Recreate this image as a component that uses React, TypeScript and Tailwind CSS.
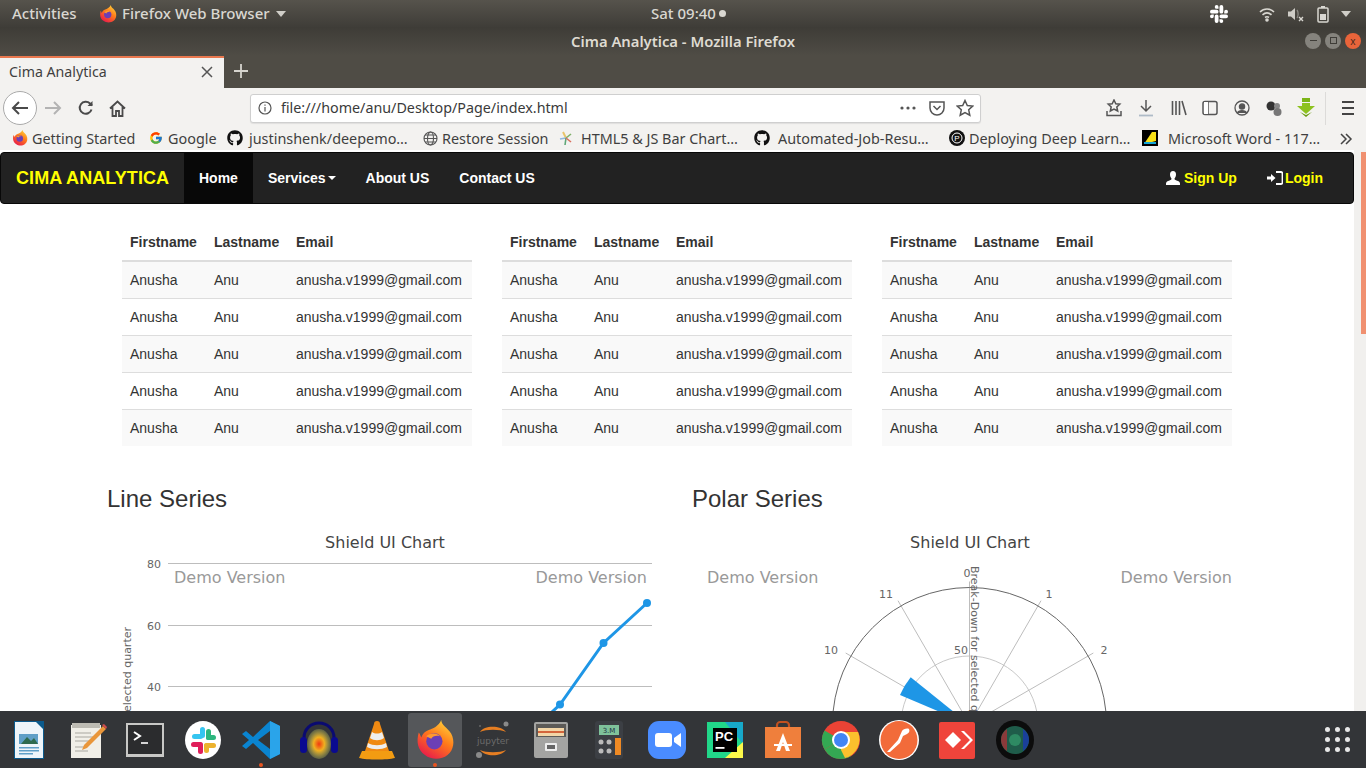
import React from "react";
import { FaGithub } from "react-icons/fa";
import { FcGoogle } from "react-icons/fc";
import { SiSlack } from "react-icons/si";

const ui = "font-['Noto_Sans','Open_Sans',sans-serif]";

function Firefox({ s = 18 }: { s?: number }) {
  return (
    <svg width={s} height={s} viewBox="0 0 32 32" className="shrink-0">
      <defs>
        <linearGradient id="ffa" x1="0.8" y1="0" x2="0.2" y2="1">
          <stop offset="0" stopColor="#ffd43b" />
          <stop offset="0.45" stopColor="#ff7a1a" />
          <stop offset="1" stopColor="#e6134f" />
        </linearGradient>
      </defs>
      <path d="M21 0c0 4 5 6 8 11 3 6 2 13-3 17-5 4-13 4-18 0C2 24 1 17 3 10c1 1 1 2 2 4 1-3 3-5 6-6 3-1 8-3 10-8z" fill="url(#ffa)" />
      <circle cx="15.5" cy="17" r="6.5" fill="#6b3fb5" />
      <path d="M9 13c3-3 9-3 11 0-3-1-6 0-7 2l-4-2z" fill="#ff9a2e" />
    </svg>
  );
}

function Cell({ children, active, dot }: { children: React.ReactNode; active?: boolean; dot?: boolean }) {
  return (
    <div className="relative w-[58px] h-[57px] flex items-center justify-center">
      {active && <div className="absolute left-[2px] top-[2px] w-[54px] h-[54px] rounded-[3px] bg-[#55575a]" />}
      <div className="relative flex items-center justify-center">{children}</div>
      {dot && <div className="absolute left-[27px] top-[52px] w-[4px] h-[4px] rounded-full bg-[#e95420]" />}
    </div>
  );
}

const I = ({ children, w = 40, h = 40 }: { children: React.ReactNode; w?: number; h?: number }) => (
  <svg width={w} height={h} viewBox="0 0 40 40">{children}</svg>
);

function Dock() {
  return (
    <div className="h-[57px] shrink-0 bg-[#333538] flex items-center">
      <Cell>
        <I>
          <path d="M5 1h30v38H5z" fill="#0b5a8c" />
          <path d="M6 2h21l7 7v29H6z" fill="#eef5fa" />
          <path d="M27 1h8v8z" fill="#0b5a8c" />
          <path d="M10 14h19v10H10z" fill="#5f9fc7" />
          <path d="M12 24l6-7 4 4 3-3 4 6z" fill="#2f6b4f" />
          <path d="M10 27h20v1.5H10zM10 30h20v1.5H10zM10 33h14v1.5H10z" fill="#5f9fc7" />
        </I>
      </Cell>
      <Cell>
        <I>
          <path d="M4 5h30v33H4z" fill="#f1efe8" />
          <path d="M5 3h28v5H5z" fill="#bdbbb3" />
          <path d="M8 13h16M8 17h18M8 21h14M8 27h10M8 31h13" stroke="#a9a7a0" strokeWidth="1.2" />
          <path d="M36 6l3 3-19 19-5 2 2-5z" fill="#e9963a" />
          <path d="M35 5l4 4 1-2-3-3z" fill="#d24c4c" />
        </I>
      </Cell>
      <Cell>
        <I>
          <rect x="1" y="3" width="38" height="34" fill="#c8c8c6" />
          <rect x="3" y="5" width="34" height="29" fill="#2b2c2e" />
          <path d="M9 12l6 4-6 4" fill="none" stroke="#fff" strokeWidth="2" />
          <path d="M16 23h7" stroke="#fff" strokeWidth="1.6" />
        </I>
      </Cell>
      <Cell>
        <I>
          <ellipse cx="20" cy="20" rx="18" ry="19" fill="#fff" />
          <rect x="17" y="7" width="5" height="11" rx="2.5" fill="#36c5f0" />
          <rect x="9" y="14" width="11" height="5" rx="2.5" fill="#36c5f0" />
          <rect x="23" y="9" width="5" height="11" rx="2.5" fill="#2eb67d" />
          <rect x="23" y="15" width="10" height="5" rx="2.5" fill="#2eb67d" />
          <rect x="21" y="23" width="12" height="5" rx="2.5" fill="#ecb22e" />
          <rect x="21" y="23" width="5" height="10" rx="2.5" fill="#ecb22e" />
          <rect x="8" y="22" width="11" height="5" rx="2.5" fill="#e01e5a" />
          <rect x="15" y="22" width="5" height="12" rx="2.5" fill="#e01e5a" />
        </I>
      </Cell>
      <Cell dot>
        <I>
          <path d="M29 1l10 5v28l-10 5-17-16-7 6-4-3 7-6-7-6 4-3 7 6z" fill="#0a84d0" />
          <path d="M29 1l10 5v28l-10 5z" fill="#2aa4ea" />
          <path d="M29 11L17 20l12 9z" fill="#333538" />
        </I>
      </Cell>
      <Cell>
        <I>
          <defs>
            <radialGradient id="aud">
              <stop offset="0" stopColor="#f03a10" />
              <stop offset="0.45" stopColor="#f0b020" />
              <stop offset="1" stopColor="#b9c060" stopOpacity="0.3" />
            </radialGradient>
          </defs>
          <path d="M5 24V18C5 9 12 3 20 3s15 6 15 15v6" fill="none" stroke="#0a0a70" strokeWidth="3" />
          <ellipse cx="20" cy="24" rx="12" ry="15" fill="url(#aud)" />
          <rect x="1" y="17" width="7" height="16" rx="3.5" fill="#0a0a90" />
          <rect x="32" y="17" width="7" height="16" rx="3.5" fill="#0a0a90" />
        </I>
      </Cell>
      <Cell>
        <I>
          <path d="M20 1c2 0 3 1 3 3l9 27H8l9-27c0-2 1-3 3-3z" fill="#f08a12" />
          <path d="M15 12c3 2 7 2 10 0l2 6c-4 3-10 3-14 0zM11 23c5 3 13 3 18 0l1 4c-6 3-14 3-20 0z" fill="#eee" />
          <path d="M5 31h30l3 7c-8 2-28 2-36 0z" fill="#f39c12" />
        </I>
      </Cell>
      <Cell active dot>
        <Firefox s={40} />
      </Cell>
      <Cell>
        <I>
          <path d="M7 12c4-7 21-7 26 0-6-3-20-3-26 0zM7 30c5 7 21 7 26 0-6 3-20 3-26 0z" fill="#e67e22" />
          <text x="20" y="23.5" textAnchor="middle" fontSize="9" fill="#6b6b6b" fontFamily="DejaVu Sans">jupyter</text>
          <circle cx="33" cy="4" r="2.5" fill="#8a8a8a" />
          <circle cx="6" cy="35" r="3" fill="#8a8a8a" />
          <circle cx="7" cy="6" r="1" fill="#666" />
        </I>
      </Cell>
      <Cell>
        <I>
          <rect x="3" y="2" width="34" height="36" rx="2" fill="#a4a4a2" />
          <rect x="5" y="4" width="30" height="13" fill="#5c5a57" />
          <rect x="7" y="8" width="26" height="8" fill="#f3d6a7" />
          <rect x="7" y="11" width="26" height="2" fill="#d4653c" />
          <rect x="14" y="23" width="12" height="8" rx="1" fill="#eee" />
          <rect x="16" y="25" width="8" height="4" fill="#666" />
        </I>
      </Cell>
      <Cell>
        <I>
          <rect x="6" y="1" width="28" height="38" rx="3" fill="#3c3f44" />
          <rect x="10" y="5" width="20" height="10" fill="#7fc29b" />
          <text x="20" y="13" textAnchor="middle" fontSize="7" fill="#234" fontFamily="DejaVu Sans">3.M</text>
          <rect x="26" y="18" width="6" height="17" fill="#ef8a24" />
          <circle cx="12" cy="22" r="2.5" fill="#bbb" />
          <circle cx="20" cy="22" r="2.5" fill="#bbb" />
          <circle cx="12" cy="31" r="2.5" fill="#bbb" />
          <circle cx="20" cy="31" r="2.5" fill="#bbb" />
        </I>
      </Cell>
      <Cell>
        <I>
          <rect x="1" y="1" width="38" height="38" rx="11" fill="#4a8cff" />
          <rect x="8" y="13" width="17" height="14" rx="3" fill="#fff" />
          <path d="M27 18l7-5v14l-7-5z" fill="#fff" />
        </I>
      </Cell>
      <Cell>
        <I>
          <path d="M2 2h36v36H2z" fill="#21d789" />
          <path d="M20 2h18v22z" fill="#17a8c9" />
          <path d="M20 38l18-16v16z" fill="#fcf84a" />
          <rect x="8" y="8" width="24" height="24" fill="#000" />
          <text x="10" y="21" fontSize="13" fontWeight="700" fill="#fff" fontFamily="Liberation Sans">PC</text>
          <rect x="10.5" y="27" width="9" height="1.8" fill="#fff" />
        </I>
      </Cell>
      <Cell>
        <I>
          <path d="M14 9V5c0-2 2-3 3-3h6c1 0 3 1 3 3v4" fill="none" stroke="#c2501f" strokeWidth="2.2" />
          <path d="M2 7h36l0 31H2z" fill="#ef7f3c" />
          <path d="M20 13l-7 18h4l3-9 3 9h4z" fill="#fff" />
          <rect x="11" y="24" width="18" height="2" fill="#fff" />
        </I>
      </Cell>
      <Cell>
        <I>
          <circle cx="20" cy="20" r="19" fill="#ea4335" />
          <path d="M20 20L3.5 29.5A19 19 0 0 1 3.5 10.5z" fill="#34a853" />
          <path d="M20 20L3.5 29.5A19 19 0 0 0 20 39c4 0 7-1 10-3z" fill="#34a853" />
          <path d="M20 12h17a19 19 0 0 1-13 26l-4-8z" fill="#fbc02d" />
          <circle cx="20" cy="20" r="9" fill="#fff" />
          <circle cx="20" cy="20" r="7" fill="#4285f4" />
        </I>
      </Cell>
      <Cell>
        <I>
          <ellipse cx="20" cy="20" rx="20" ry="20" fill="#fff" />
          <ellipse cx="20" cy="20" rx="18.5" ry="19" fill="#f26b3a" />
          <path d="M8 32l11-12 4-9c1-2 5-3 7-2 1 2 0 4-2 5l-4 2-3 7-10 9z" fill="#fff" />
        </I>
      </Cell>
      <Cell>
        <I>
          <rect x="2" y="2" width="36" height="37" rx="2" fill="#ef443b" />
          <path d="M16 12l8 8-8 8-8-8z" fill="#fff" />
          <path d="M24 11l3-0 9 9-9 9h-3l9-9z" fill="#fff" />
        </I>
      </Cell>
      <Cell>
        <I>
          <ellipse cx="20" cy="20" rx="19" ry="20" fill="#0c0c0c" />
          <circle cx="20" cy="20" r="14" fill="#1f5c4a" />
          <path d="M6 20a14 14 0 0 1 6-11v22a14 14 0 0 1-6-11z" fill="#8a3a3a" />
          <path d="M34 20a14 14 0 0 0-6-11v22a14 14 0 0 0 6-11z" fill="#1a3f9a" />
          <circle cx="20" cy="20" r="6" fill="#2e8a63" />
        </I>
      </Cell>
      <div className="ml-[281px] grid grid-cols-3 gap-[5.5px] w-[25px]">
        {Array.from({ length: 9 }).map((_, i) => (
          <div key={i} className="w-[4.5px] h-[4.5px] rounded-full bg-[#e8e8e8]" />
        ))}
      </div>
    </div>
  );
}

function TopBar() {
  return (
    <div className={`${ui} h-[27px] shrink-0 bg-gradient-to-b from-[#56534c] to-[#3f3d38] flex items-center text-[15px] font-medium text-[#d9d7d1]`}>
      <span className="ml-[12px] w-[87px] whitespace-nowrap">Activities</span>
      <Firefox s={18} />
      <span className="ml-[5px] w-[154px] whitespace-nowrap">Firefox Web Browser</span>
      <svg width="10" height="6" viewBox="0 0 10 6" className="mr-[365px]"><path d="M0 0h10L5 6z" fill="#d0cec8" /></svg>
      <span className="w-[66px] whitespace-nowrap">Sat 09:40</span>
      <span className="w-[7px] h-[7px] rounded-full bg-[#d9d7d1] ml-[2px] mr-[484px]" />
      <SiSlack className="text-white" size={18} />
      <svg width="18" height="18" viewBox="0 0 18 18" className="ml-[30px]" fill="none" stroke="#d9d7d1" strokeWidth="1.6">
        <path d="M2 7c4-4 10-4 14 0M4.5 9.8c3-2.5 6-2.5 9 0M7 12.5c1.400-1 2.600-1 4 0" />
        <circle cx="9" cy="15" r="1" fill="#d9d7d1" />
      </svg>
      <svg width="18" height="18" viewBox="0 0 18 18" className="ml-[10px]">
        <path d="M2 6.500h3l4-3.500v12l-4-3.500H2z" fill="#cfcdc7" />
        <path d="M11 5c1.500 2 1.500 6 0 8" stroke="#8b8983" strokeWidth="1.300" fill="none" />
        <path d="M13 12l4 4M17 12l-4 4" stroke="#d9d7d1" strokeWidth="1.400" />
      </svg>
      <svg width="12" height="18" viewBox="0 0 12 18" className="ml-[13px]" fill="none">
        <rect x="1" y="3" width="10" height="14" rx="1" stroke="#d9d7d1" strokeWidth="1.500" />
        <rect x="4" y="1" width="4" height="2" fill="#d9d7d1" />
        <rect x="3" y="9" width="6" height="6" fill="#d9d7d1" />
      </svg>
      <svg width="10" height="6" viewBox="0 0 10 6" className="ml-[12px]"><path d="M0 0h10L5 6z" fill="#d0cec8" /></svg>
    </div>
  );
}

function TitleBar() {
  return (
    <div className={`${ui} h-[29px] shrink-0 bg-gradient-to-b from-[#3e3c37] to-[#4f4c45] grid grid-cols-[1fr_auto_1fr] items-center`}>
      <div />
      <span className="text-[14.8px] leading-[20px] pb-[2px] font-semibold text-[#dfdbd2] whitespace-nowrap">Cima Analytica - Mozilla Firefox</span>
      <div className="flex justify-end gap-[4px] pr-[5px] pb-[2px]">
        <div className="w-[16px] h-[16px] rounded-full bg-[#85837d] flex items-center justify-center"><div className="w-[7px] h-[1px] bg-[#3f3d38]" /></div>
        <div className="w-[16px] h-[16px] rounded-full bg-[#85837d] flex items-center justify-center"><div className="w-[7px] h-[7px] border border-[#3f3d38]" /></div>
        <div className="w-[16px] h-[16px] rounded-full bg-[#e9643a] flex items-center justify-center text-[10px] leading-none text-[#4a2a1a]">x</div>
      </div>
    </div>
  );
}

function TabRow() {
  return (
    <div className={`${ui} h-[32px] shrink-0 bg-[#4f4c45] flex`}>
      <div className="w-[224px] h-[32px] bg-[#f3f2f0] border-t-2 border-[#e9784f] flex items-center pl-[9px] pr-[11px] pb-[3px] text-[14.2px] text-[#3f3f3f]">
        <span className="flex-1 whitespace-nowrap">Cima Analytica</span>
        <svg width="12" height="12" viewBox="0 0 12 12" stroke="#555" strokeWidth="1.500"><path d="M1 1l10 10M11 1L1 11" /></svg>
      </div>
      <svg width="14" height="14" viewBox="0 0 14 14" className="ml-[10px] mt-[8px]" stroke="#d6d4ce" strokeWidth="1.800"><path d="M7 0v14M0 7h14" /></svg>
    </div>
  );
}

function Toolbar() {
  const stroke = "#4a4a4a";
  return (
    <div className={`${ui} h-[37px] pt-[3px] shrink-0 bg-[#f3f2f0] flex items-center`}>
      <div className="ml-[3px] w-[34px] h-[34px] rounded-full bg-white border border-[#aaa] flex items-center justify-center">
        <svg width="18" height="16" viewBox="0 0 18 16" fill="none" stroke={stroke} strokeWidth="2"><path d="M17 8H2M8 2L2 8l6 6" /></svg>
      </div>
      <svg width="18" height="16" viewBox="0 0 18 16" fill="none" stroke="#b3b3b3" strokeWidth="2" className="ml-[7px]"><path d="M1 8h15M10 2l6 6-6 6" /></svg>
      <svg width="16" height="16" viewBox="0 0 16 16" fill="none" stroke={stroke} strokeWidth="2" className="ml-[16px]"><path d="M13.500 9.500A6 6 0 1 1 12 3.500l2 2" /><path d="M14.500 1v5h-5" fill={stroke} stroke="none" /></svg>
      <svg width="17" height="17" viewBox="0 0 17 17" fill="none" stroke={stroke} strokeWidth="1.800" className="ml-[15px]"><path d="M1 8.500l7.500-7 7.500 7M3.500 7v9h3.500v-5h3v5h3.500V7" /></svg>
      <div className="ml-[124px] w-[731px] h-[29px] bg-white border border-[#cfcfcf] rounded-[3px] flex items-center pl-[7px] pr-[6px] shadow-[0_1px_1px_rgba(0,0,0,0.08)]">
        <svg width="14" height="14" viewBox="0 0 14 14" fill="none" stroke="#555" strokeWidth="1.200"><circle cx="7" cy="7" r="6" /><path d="M7 6v4.500M7 3.500v1.200" /></svg>
        <span className="ml-[9px] flex-1 text-[14.3px] text-[#3a3a3a] whitespace-nowrap">file:///home/anu/Desktop/Page/index.html</span>
        <svg width="16" height="4" viewBox="0 0 16 4" fill="#555"><circle cx="2" cy="2" r="1.600" /><circle cx="8" cy="2" r="1.600" /><circle cx="14" cy="2" r="1.600" /></svg>
        <svg width="16" height="16" viewBox="0 0 16 16" fill="none" stroke="#555" strokeWidth="1.500" className="ml-[13px]"><path d="M1 2h14v6a7 7 0 0 1-14 0z" /><path d="M4.500 6L8 9.500 11.500 6" /></svg>
        <svg width="18" height="18" viewBox="0 0 18 18" fill="none" stroke="#555" strokeWidth="1.500" className="ml-[11px]"><path d="M9 1.500l2.300 5 5.400.6-4 3.700 1.100 5.400L9 13.500l-4.800 2.700 1.100-5.400-4-3.700 5.400-.6z" /></svg>
      </div>
      <svg width="16" height="18" viewBox="0 0 16 18" fill="none" stroke="#555" strokeWidth="1.500" className="ml-[125px]"><path d="M8 1l1.800 3.800 4 .4-3 2.800.9 4L8 10l-3.700 2 .9-4-3-2.800 4-.4z" /><path d="M1 12v4.500h14V12" /></svg>
      <svg width="16" height="18" viewBox="0 0 16 18" fill="none" className="ml-[16px]"><path d="M8 1v11M3 7l5 5 5-5" stroke="#555" strokeWidth="1.500" /><path d="M1 16.500h14" stroke="#aebbc7" strokeWidth="1.800" /></svg>
      <svg width="16" height="16" viewBox="0 0 16 16" fill="none" stroke="#555" strokeWidth="1.600" className="ml-[17px]"><path d="M1.500 1v14M5 1v14M8.500 1v14M11 1l4 14" /></svg>
      <svg width="16" height="16" viewBox="0 0 16 16" fill="none" stroke="#555" strokeWidth="1.500" className="ml-[15px]"><rect x="1" y="1.500" width="14" height="13" rx="2" /><path d="M6 1.500v13" /><path d="M2 2h4v12H2z" fill="#fff" stroke="none" /></svg>
      <svg width="16" height="16" viewBox="0 0 16 16" fill="none" stroke="#555" strokeWidth="1.300" className="ml-[16px]"><circle cx="8" cy="8" r="7" /><circle cx="8" cy="6.500" r="2.600" fill="#555" /><path d="M3.500 13c1-3 8-3 9 0" fill="#555" /></svg>
      <svg width="18" height="18" viewBox="0 0 18 18" className="ml-[15px]"><circle cx="6" cy="7" r="4.500" fill="#333" /><circle cx="12" cy="7" r="3" fill="#888" /><circle cx="12.500" cy="13" r="4" fill="#777" /></svg>
      <svg width="18" height="20" viewBox="0 0 18 20" className="ml-[14px]"><path d="M5 0h8v4h-8z" fill="#7cb518" /><path d="M5 5h8v3h5l-9 8-9-8h5z" fill="#8dc21f" /><path d="M3 14l6 5 6-5-6 3z" fill="#6a9c10" /></svg>
      <div className="ml-[10px] w-[1px] h-[33px] bg-[#dcdbd9]" />
      <div className="ml-[16px] flex flex-col gap-[4px]">
        <div className="w-[12px] h-[2px] bg-[#444]" /><div className="w-[12px] h-[2px] bg-[#444]" /><div className="w-[12px] h-[2px] bg-[#444]" />
      </div>
    </div>
  );
}

function Book({ w, icon, text, g = 4 }: { w: number; icon: React.ReactNode; text: string; g?: number }) {
  return (
    <div className="flex items-center shrink-0" style={{ width: w }}>
      <span className="w-[16px] flex justify-center shrink-0">{icon}</span>
      <span className="whitespace-nowrap text-[14.4px] text-[#3f3f3f]" style={{ marginLeft: g }}>{text}</span>
    </div>
  );
}

function Bookmarks() {
  return (
    <div className={`${ui} h-[25px] pt-[2px] shrink-0 bg-[#f3f2f0] flex items-center pl-[12px]`}>
      <Book w={136} icon={<Firefox s={16} />} text="Getting Started" />
      <Book w={79} icon={<FcGoogle size={14} />} text="Google" />
      <Book w={195} g={6} icon={<FaGithub size={16} color="#111" />} text="justinshenk/deepemo…" />
      <Book w={136} icon={
        <svg width="15" height="15" viewBox="0 0 15 15" fill="none" stroke="#555" strokeWidth="1.100"><circle cx="7.500" cy="7.500" r="6.500" /><ellipse cx="7.500" cy="7.500" rx="3" ry="6.500" /><path d="M1 7.500h13M2 4h11M2 11h11" /></svg>
      } text="Restore Session" />
      <Book w={196} g={7} icon={
        <svg width="16" height="16" viewBox="0 0 16 16"><path d="M8 8L5 2" stroke="#e9c46a" strokeWidth="2" /><path d="M8 8l5-4" stroke="#7fb069" strokeWidth="1.600" /><path d="M8 8l-6 1" stroke="#8fb8de" strokeWidth="1.600" /><path d="M8 8l-1 7" stroke="#5fa777" strokeWidth="1.600" /><path d="M8 8l5 4" stroke="#d9705f" strokeWidth="1.600" /></svg>
      } text="HTML5 & JS Bar Chart…" />
      <Book w={195} g={8} icon={<FaGithub size={16} color="#111" />} text="Automated-Job-Resu…" />
      <Book w={193} icon={
        <svg width="16" height="16" viewBox="0 0 16 16"><circle cx="8" cy="8" r="8" fill="#111" /><circle cx="8" cy="8" r="5" fill="none" stroke="#fff" strokeWidth="1" /><text x="8" y="11" textAnchor="middle" fontSize="8" fill="#fff" fontFamily="Liberation Sans">P</text></svg>
      } text="Deploying Deep Learn…" />
      <Book w={197} g={10} icon={
        <svg width="16" height="16" viewBox="0 0 16 16"><rect width="16" height="16" fill="#000" /><path d="M2 14L10 2h4v9z" fill="#f7e017" /><path d="M2 12h12v2H2z" fill="#14a6d8" /></svg>
      } text="Microsoft Word - 117…" />
      <svg width="14" height="12" viewBox="0 0 14 12" fill="none" stroke="#444" strokeWidth="1.500"><path d="M2 1l5 5-5 5M7 1l5 5-5 5" /></svg>
    </div>
  );
}

function Navbar() {
  const link = "h-full flex items-center px-[15px] text-[14px] font-bold text-white";
  return (
    <nav className="mt-[2px] h-[52px] bg-[#222222] border border-[#080808] rounded-[4px] flex items-stretch">
      <div className="w-[183px] flex items-center pl-[15px] text-[18px] tracking-[0.08px] font-bold text-[#ffff00] whitespace-nowrap">CIMA ANALYTICA</div>
      <div className={`${link} bg-[#080808]`}>Home</div>
      <div className={link}>
        Services
        <span className="ml-[2px] w-0 h-0 border-x-[4px] border-x-transparent border-t-[4px] border-t-white" />
      </div>
      <div className={link}>About US</div>
      <div className={link}>Contact US</div>
      <div className="ml-auto flex items-center pr-[30px] text-[14px] font-bold text-[#ffff00]">
        <svg width="14" height="14" viewBox="0 0 14 14" fill="#fff"><path d="M7 0c2 0 3 1.500 3 3.500S9 7 8.500 7.500c0 1 .5 1.500 2 2 2 .7 3.500 1.300 3.500 3V14H0v-1.500c0-1.700 1.500-2.300 3.500-3 1.500-.5 2-1 2-2C5 7 4 5.500 4 3.500S5 0 7 0z" /></svg>
        <span className="ml-[4px]">Sign Up</span>
        <svg width="16" height="14" viewBox="0 0 16 14" className="ml-[30px]" fill="#fff"><path d="M0 5.500h4V3l4.500 4L4 11V8.500H0z" /><path d="M9 1h5a1.500 1.500 0 0 1 1.500 1.500v9A1.500 1.500 0 0 1 14 13H9" fill="none" stroke="#fff" strokeWidth="1.800" /></svg>
        <span className="ml-[2px]">Login</span>
      </div>
    </nav>
  );
}

function DataTable() {
  return (
    <table className="w-[350px] table-fixed text-[14px] text-[#333]">
      <thead>
        <tr className="h-[38px] border-b-2 border-[#dddddd] text-left">
          <th className="w-[84px] pl-[8px] pt-[1px] font-bold">Firstname</th>
          <th className="w-[82px] pl-[8px] pt-[1px] font-bold">Lastname</th>
          <th className="pl-[8px] pt-[1px] font-bold">Email</th>
        </tr>
      </thead>
      <tbody>
        {[0, 1, 2, 3, 4].map((i) => (
          <tr key={i} className={`h-[37px] ${i < 4 ? "border-b border-[#dddddd]" : ""} ${i % 2 === 0 ? "bg-[#f9f9f9]" : ""}`}>
            <td className="pl-[8px] pt-[1px]">Anusha</td>
            <td className="pl-[8px] pt-[1px]">Anu</td>
            <td className="pl-[8px] pt-[1px] whitespace-nowrap">anusha.v1999@gmail.com</td>
          </tr>
        ))}
      </tbody>
    </table>
  );
}

const sv = "DejaVu Sans, sans-serif";

function LineChart() {
  return (
    <svg width="555" height="190" viewBox="0 0 555 190" className="block" fontFamily={sv}>
      <text x="278" y="18" textAnchor="middle" fontSize="16" fill="#444">Shield UI Chart</text>
      <text x="67" y="53" fontSize="16" fill="#999">Demo Version</text>
      <text x="540" y="53" textAnchor="end" fontSize="16" fill="#999">Demo Version</text>
      {[33.500, 95.500, 156.500].map((y, i) => (
        <g key={y}>
          <path d={`M61 ${y}H545`} stroke="#bdbdbd" />
          <text x="54" y={y + 4} textAnchor="end" fontSize="11" fill="#666">{["80", "60", "40"][i]}</text>
        </g>
      ))}
      <text transform="translate(24 97) rotate(-90)" fontSize="11" fill="#666" textAnchor="end">Break-Down for selected quarter</text>
      <path d="M430 196L453 174.500 496.500 113 540 73" fill="none" stroke="#1e96e6" strokeWidth="3" />
      <circle cx="453" cy="174.500" r="4" fill="#1e96e6" />
      <circle cx="496.500" cy="113" r="4" fill="#1e96e6" />
      <circle cx="540" cy="73" r="4" fill="#1e96e6" />
    </svg>
  );
}

function PolarChart() {
  const cx = 277.500;
  const cy = 194.500;
  const R = 137;
  const spoke = (deg: number) => {
    const a = (deg * Math.PI) / 180;
    return `M${cx} ${cy}L${cx + (R + 6) * Math.sin(a)} ${cy - (R + 6) * Math.cos(a)}`;
  };
  return (
    <svg width="555" height="190" viewBox="0 0 555 190" className="block" fontFamily={sv}>
      <text x="278" y="18" textAnchor="middle" fontSize="16" fill="#444">Shield UI Chart</text>
      <text x="15" y="53" fontSize="16" fill="#999">Demo Version</text>
      <text x="540" y="53" textAnchor="end" fontSize="16" fill="#999">Demo Version</text>
      <circle cx={cx} cy={cy} r={68.500} fill="none" stroke="#c8c8c8" />
      {[-60, -30, 0, 30, 60].map((d) => (
        <path key={d} d={spoke(d)} stroke="#bdbdbd" />
      ))}
      <circle cx={cx} cy={cy} r={R} fill="none" stroke="#666" />
      <path d="M277.500 194.500L218.700 147.300A75.500 75.500 0 0 0 208 165z" fill="#1e96e6" />
      <g fontSize="11" fill="#666">
        <text x="275" y="47" textAnchor="middle">0</text>
        <text x="357" y="68" textAnchor="middle">1</text>
        <text x="412" y="124" textAnchor="middle">2</text>
        <text x="139" y="124" textAnchor="middle">10</text>
        <text x="194" y="68" textAnchor="middle">11</text>
        <text x="269" y="124" textAnchor="middle">50</text>
      </g>
      <text transform="translate(278.500 36) rotate(90)" fontSize="11" fill="#666">Break-Down for selected quarter</text>
    </svg>
  );
}

function Page() {
  return (
    <div className="flex-1 min-h-0 overflow-hidden flex bg-white font-['Liberation_Sans',Arial,sans-serif]">
      <main className="w-[1354px] shrink-0">
        <Navbar />
        <div className="mt-[19px] flex gap-[30px] justify-center">
          <DataTable />
          <DataTable />
          <DataTable />
        </div>
        <div className="mt-[40px] flex justify-center">
          <section className="w-[585px] px-[15px]">
            <h2 className="h-[26px] text-[24px] leading-[26px] text-[#333]">Line Series</h2>
            <div className="mt-[18px]"><LineChart /></div>
          </section>
          <section className="w-[585px] px-[15px]">
            <h2 className="h-[26px] text-[24px] leading-[26px] text-[#333]">Polar Series</h2>
            <div className="mt-[18px]"><PolarChart /></div>
          </section>
        </div>
      </main>
      <div className="w-[12px] shrink-0 bg-[#f1f0ee] flex justify-end pt-[2px]">
        <div className="w-[5px] h-[182px] bg-[#f09070]" />
      </div>
    </div>
  );
}

export default function App() {
  return (
    <div className="w-[1366px] h-[768px] overflow-hidden flex flex-col">
      <TopBar />
      <TitleBar />
      <TabRow />
      <Toolbar />
      <Bookmarks />
      <Page />
      <div className={ui}><Dock /></div>
    </div>
  );
}
